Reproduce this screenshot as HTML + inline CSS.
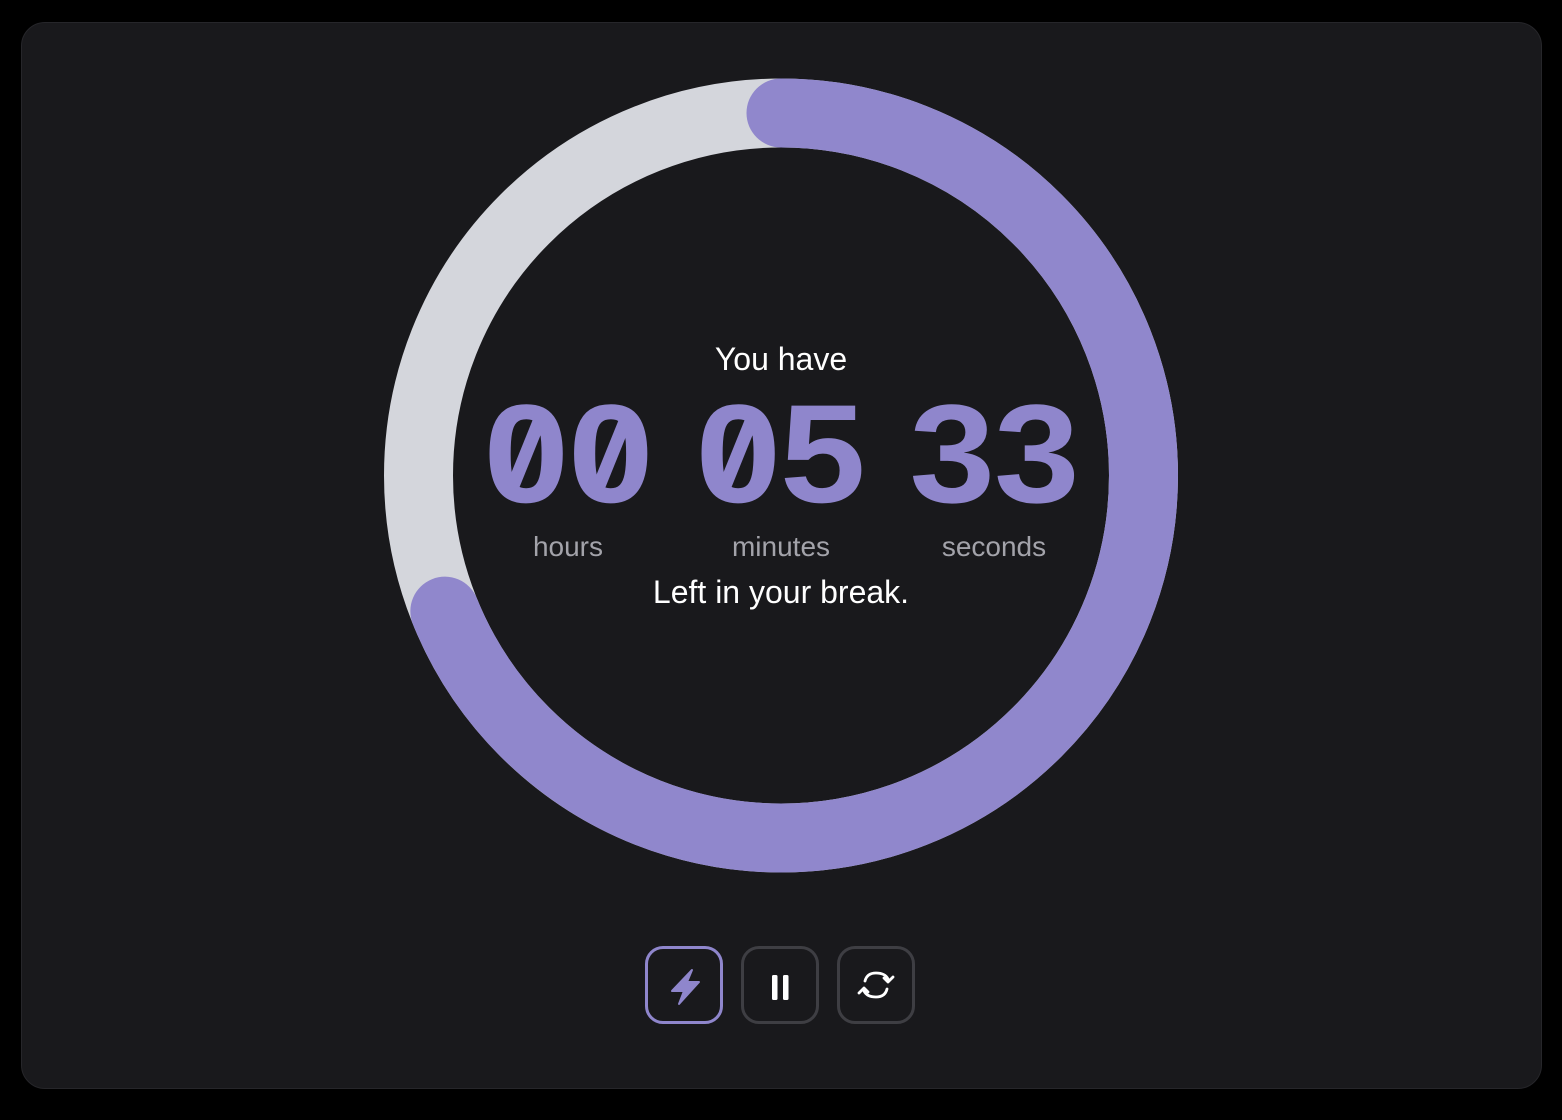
<!DOCTYPE html>
<html><head><meta charset="utf-8"><style>
html,body{margin:0;padding:0;background:#000;width:1562px;height:1120px;overflow:hidden;font-family:"Liberation Sans",sans-serif}
.card{position:absolute;left:21px;top:22px;width:1519px;height:1065px;background:#19191c;border:1px solid #26262a;border-radius:24px}
svg.ring{position:absolute;left:0;top:0}
.t{position:absolute;left:0;width:1562px;text-align:center;color:#fff}
.num{position:absolute;top:384px;font-weight:bold;font-size:140px;color:#8f86cc;line-height:140px;width:200px;text-align:center;letter-spacing:-1px;transform:scaleX(1.1)}
.sl{position:absolute;width:13px;height:70px;background:#8f86cc;top:420px;transform:rotate(22deg)}
.lbl{position:absolute;top:531px;font-size:28px;color:#a3a3aa;width:200px;text-align:center}
.btn{position:absolute;top:946px;width:72px;height:72px;border:3px solid #3e3e43;border-radius:18px;box-sizing:content-box}
.btn svg{position:absolute;left:0;top:0}
</style></head><body>
<div class="card"></div>
<svg class="ring" width="1562" height="1120">
<circle cx="781" cy="475.5" r="362.5" fill="none" stroke="#d4d6dc" stroke-width="69"/>
<circle cx="781" cy="475.5" r="362.5" fill="none" stroke="#9087cc" stroke-width="69" stroke-linecap="round" stroke-dasharray="1569 3000" transform="rotate(-90 781 475.5)"/>
</svg>
<div class="t" style="top:341px;font-size:32px">You have</div>
<div class="num" style="left:468px">00</div>
<div class="num" style="left:680px">05</div>
<div class="num" style="left:894px">33</div>
<div class="sl" style="left:519px"></div>
<div class="sl" style="left:605px"></div>
<div class="sl" style="left:731px"></div>
<div class="lbl" style="left:468px">hours</div>
<div class="lbl" style="left:681px">minutes</div>
<div class="lbl" style="left:894px">seconds</div>
<div class="t" style="top:574px;font-size:32px">Left in your break.</div>
<div class="btn" style="left:645px;border-color:#8f86cc"><svg width="72" height="72" viewBox="0 0 72 72"><path d="M44 21 L24 42 H36 L31 55 L51 33 H39 Z" fill="#8f86cc" stroke="#8f86cc" stroke-width="2" stroke-linejoin="round"/></svg></div>
<div class="btn" style="left:741px"><svg width="72" height="72" viewBox="0 0 72 72"><rect x="28" y="26" width="5.5" height="25" rx="1.5" fill="#fff"/><rect x="39" y="26" width="5.5" height="25" rx="1.5" fill="#fff"/></svg></div>
<div class="btn" style="left:837px"><svg width="72" height="72" viewBox="0 0 72 72" fill="none" stroke="#fff" stroke-width="2.8" stroke-linecap="round" stroke-linejoin="round"><path d="M25 32 Q27 24 36 24 Q45 24 48 30"/><path d="M44 29 L48 33 L53 28"/><path d="M47 40 Q45 48 36 48 Q27 48 24 42"/><path d="M19 44 L24 39 L28 43"/></svg></div>
</body></html>
